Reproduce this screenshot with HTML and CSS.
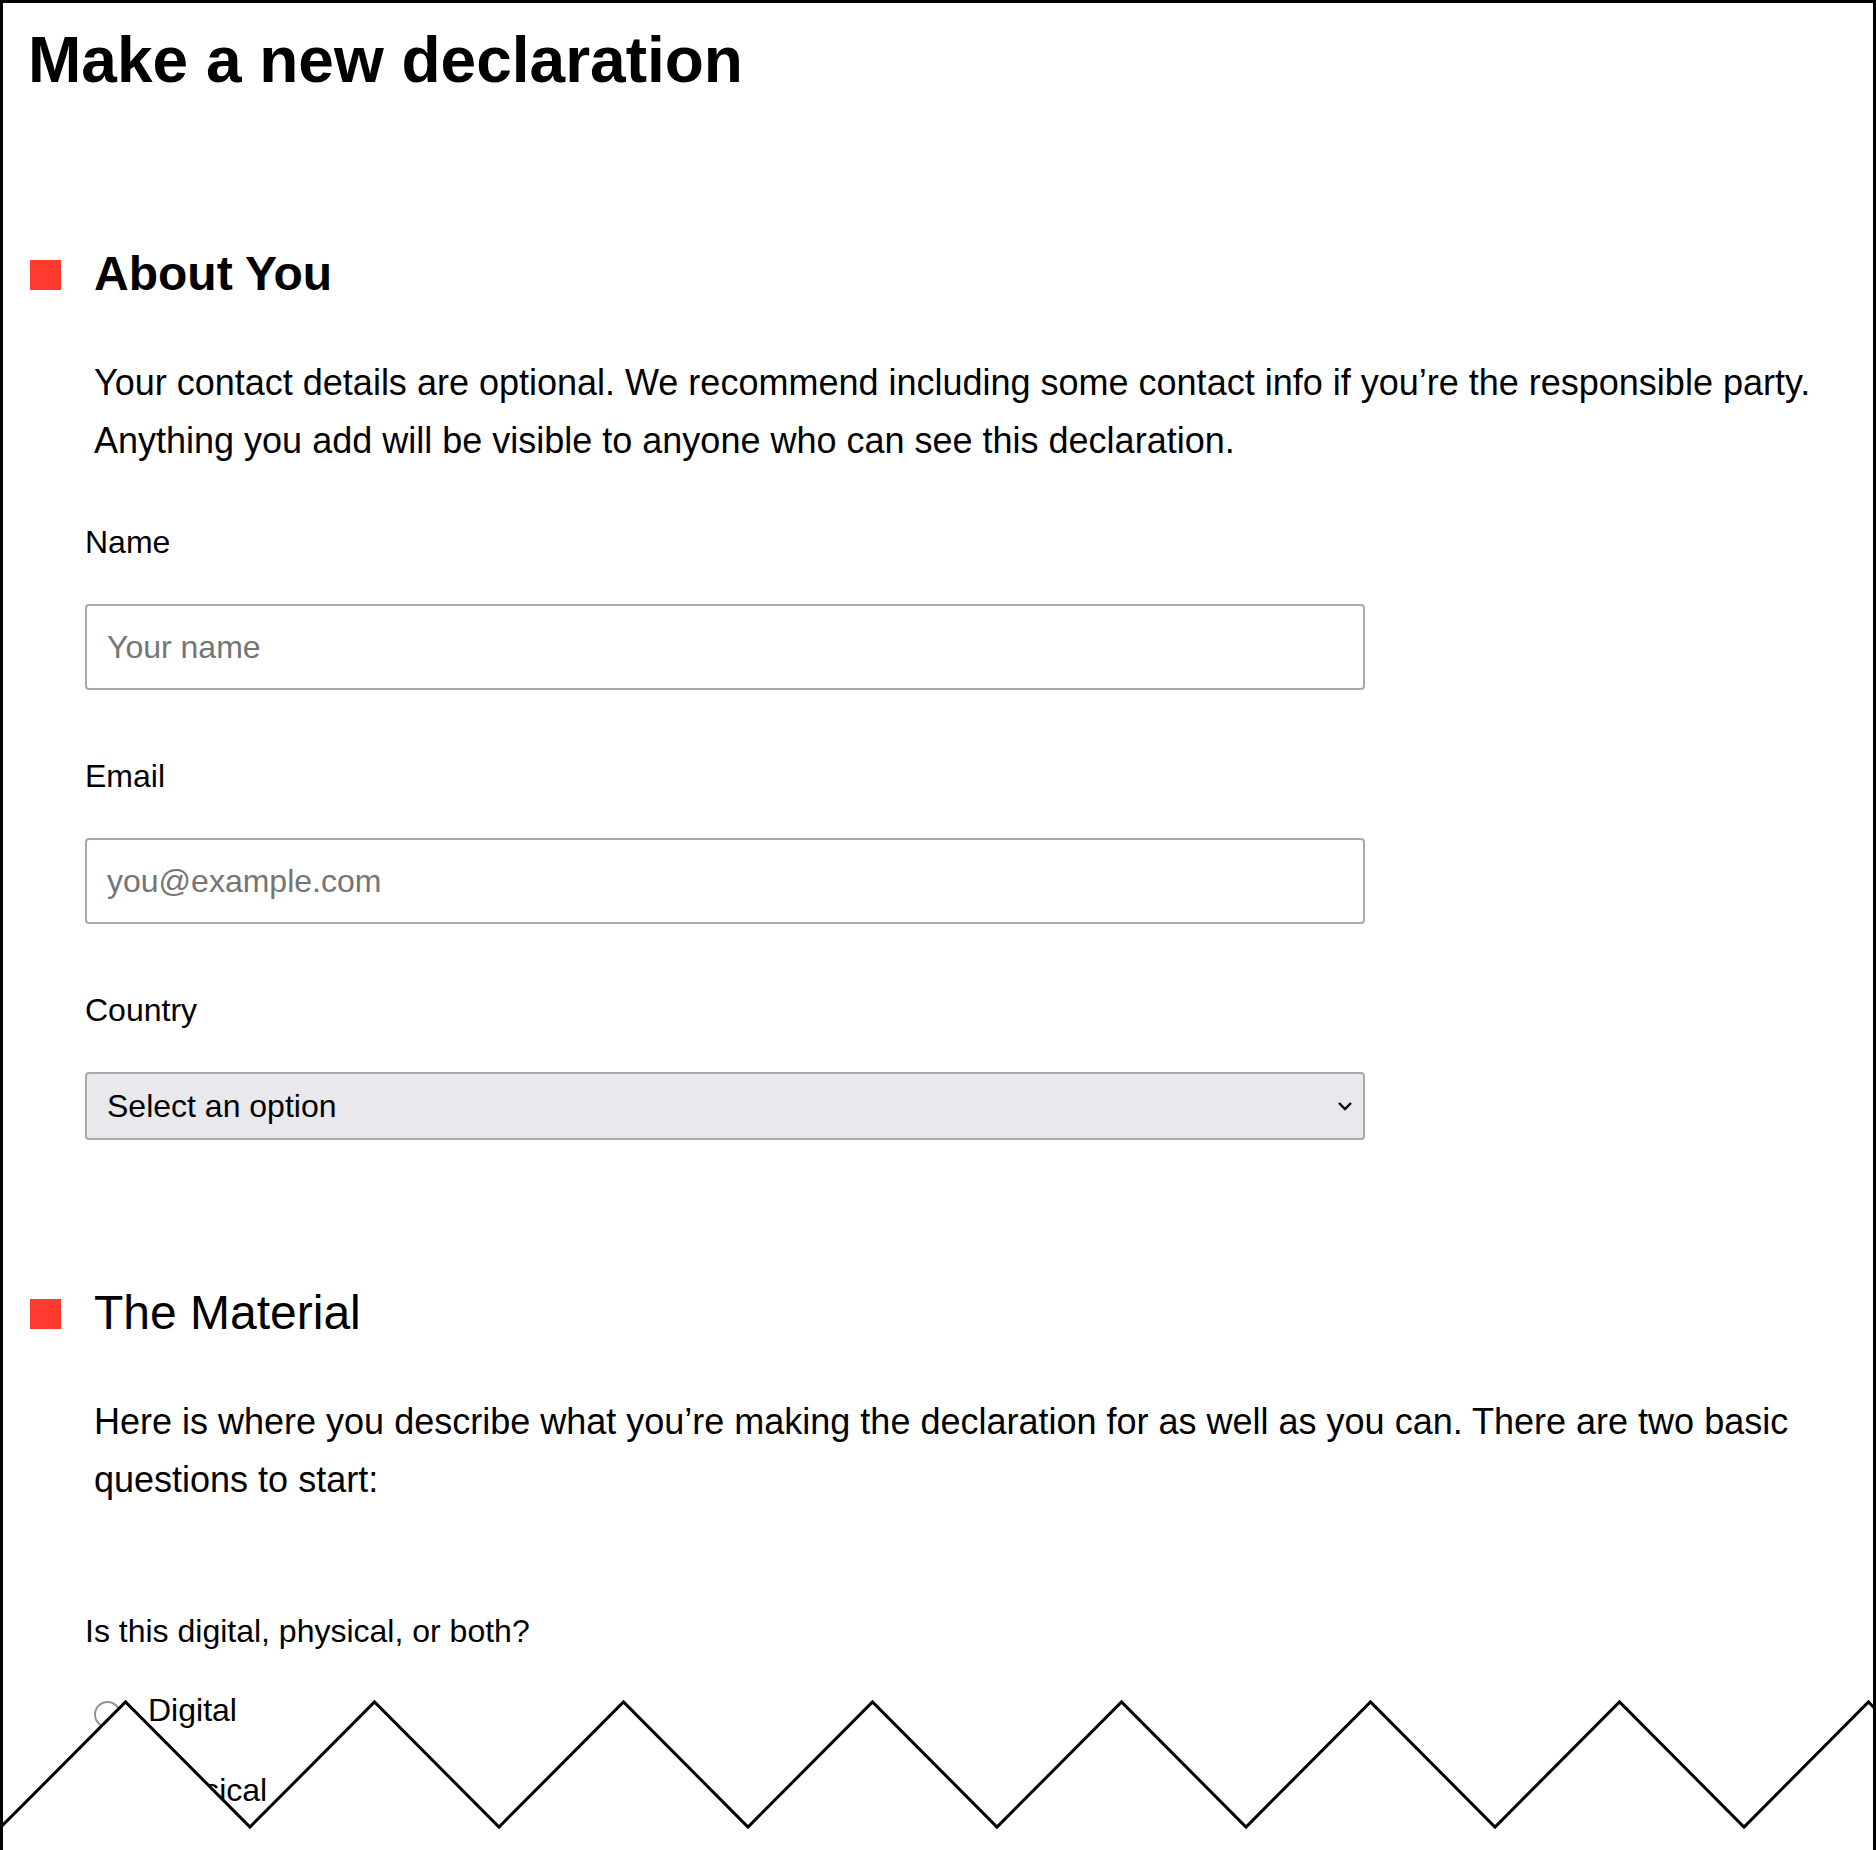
FILE: index.html
```html
<!DOCTYPE html>
<html lang="en">
<head>
<meta charset="utf-8">
<title>Make a new declaration</title>
<link rel="stylesheet" href="styles.css">
</head>
<body>
<div class="sheet">
  <h1 class="title">Make a new declaration</h1>

  <section class="section">
    <h2 class="section-head"><span class="mark"></span><span class="section-title is-bold">About You</span></h2>
    <p class="intro">Your contact details are optional. We recommend including some contact info if you’re the responsible party. Anything you add will be visible to anyone who can see this declaration.</p>
    <div class="fields">
      <div class="field">
        <label class="field-label" for="name">Name</label>
        <input class="text-input" id="name" type="text" placeholder="Your name">
      </div>
      <div class="field">
        <label class="field-label" for="email">Email</label>
        <input class="text-input" id="email" type="email" placeholder="you@example.com">
      </div>
      <div class="field">
        <label class="field-label" for="country">Country</label>
        <div class="select-wrap">
          <select class="select" id="country">
            <option>Select an option</option>
          </select>
          <svg class="chevron" width="16" height="10" viewBox="0 0 16 10"><polyline points="2,2 8,8 14,2" fill="none" stroke="#000" stroke-width="2.4"/></svg>
        </div>
      </div>
    </div>
  </section>

  <section class="section section-material">
    <h2 class="section-head"><span class="mark"></span><span class="section-title">The Material</span></h2>
    <p class="intro">Here is where you describe what you’re making the declaration for as well as you can. There are two basic questions to start:</p>
    <div class="question">
      <p class="question-label">Is this digital, physical, or both?</p>
      <div class="options">
        <label class="option"><input class="radio" type="radio" name="kind">Digital</label>
        <label class="option"><input class="radio" type="radio" name="kind">Physical</label>
        <label class="option"><input class="radio" type="radio" name="kind">Both</label>
      </div>
    </div>
  </section>

  <svg class="tear" width="1876" height="160" viewBox="0 0 1876 160">
    <path d="M-123.5,12 L1,137 L125.5,12 L250,137 L374.5,12 L499,137 L623.5,12 L748,137 L872.5,12 L997,137 L1121.5,12 L1246,137 L1370.5,12 L1495,137 L1619.5,12 L1744,137 L1868.5,12 L1993,137 L1993,170 L-123.5,170 Z" fill="#fff"/>
    <path d="M-123.5,12 L1,137 L125.5,12 L250,137 L374.5,12 L499,137 L623.5,12 L748,137 L872.5,12 L997,137 L1121.5,12 L1246,137 L1370.5,12 L1495,137 L1619.5,12 L1744,137 L1868.5,12 L1993,137" fill="none" stroke="#000" stroke-width="3"/>
  </svg>
</div>
</body>
</html>
```

FILE: styles.css
```css
html, body {
  margin: 0;
  padding: 0;
  background: #fff;
  overflow: hidden;
}

body {
  font-family: "Liberation Sans", Arial, Helvetica, sans-serif;
  color: #000;
}

.sheet {
  position: relative;
  box-sizing: border-box;
  width: 1876px;
  height: 1850px;
  border: 3px solid #000;
  border-bottom: none;
  padding: 20px 30px 0 27px;
  overflow: hidden;
}

.title {
  margin: 0 0 0 -2px;
  font-size: 64px;
  line-height: 74px;
  font-weight: 700;
}

.section {
  margin-top: 149px;
}

.section-material {
  margin-top: 145px;
}

.section-head {
  display: flex;
  align-items: baseline;
  margin: 0;
  font-size: 48px;
  line-height: 56px;
  font-weight: 400;
}

.mark {
  flex: none;
  width: 31px;
  height: 30px;
  margin-right: 33px;
  background: #ff3b30;
}

.section-title.is-bold {
  font-weight: 700;
}

.intro {
  margin: 52px 0 0 64px;
  font-size: 36px;
  line-height: 58px;
}

.fields {
  display: flex;
  flex-direction: column;
  gap: 66px;
  margin: 52px 0 0 55px;
}

.field {
  display: flex;
  flex-direction: column;
  align-items: flex-start;
}

.field-label {
  font-size: 32px;
  line-height: 40px;
  margin-bottom: 42px;
}

.text-input {
  box-sizing: border-box;
  width: 1280px;
  height: 86px;
  margin: 0;
  padding: 0 20px;
  border: 2px solid #a9a9a9;
  border-radius: 4px;
  background: #fff;
  font-family: inherit;
  font-size: 32px;
  color: #000;
  outline: none;
}

.text-input::placeholder {
  color: #757575;
  opacity: 1;
}

.select-wrap {
  position: relative;
  width: 1280px;
}

.select {
  box-sizing: border-box;
  width: 1280px;
  height: 68px;
  margin: 0;
  padding: 0 20px;
  border: 2px solid #a9a9a9;
  border-radius: 4px;
  background: #e9e9ed;
  font-family: inherit;
  font-size: 32px;
  color: #000;
  appearance: none;
  -webkit-appearance: none;
  outline: none;
}

.chevron {
  position: absolute;
  right: 12px;
  top: 29px;
  pointer-events: none;
}

.question {
  margin: 102px 0 0 55px;
}

.question-label {
  margin: 0;
  font-size: 32px;
  line-height: 40px;
}

.options {
  display: flex;
  flex-direction: column;
  gap: 40px;
  margin-top: 39px;
}

.option {
  display: flex;
  align-items: center;
  font-size: 32px;
  line-height: 40px;
}

.radio {
  appearance: none;
  -webkit-appearance: none;
  box-sizing: border-box;
  width: 27px;
  height: 27px;
  margin: 8px 27px 0 9px;
  border: 2px solid #8f8f9d;
  border-radius: 50%;
  background: #fff;
}

.tear {
  position: absolute;
  left: -3px;
  bottom: 0;
  display: block;
}
```
